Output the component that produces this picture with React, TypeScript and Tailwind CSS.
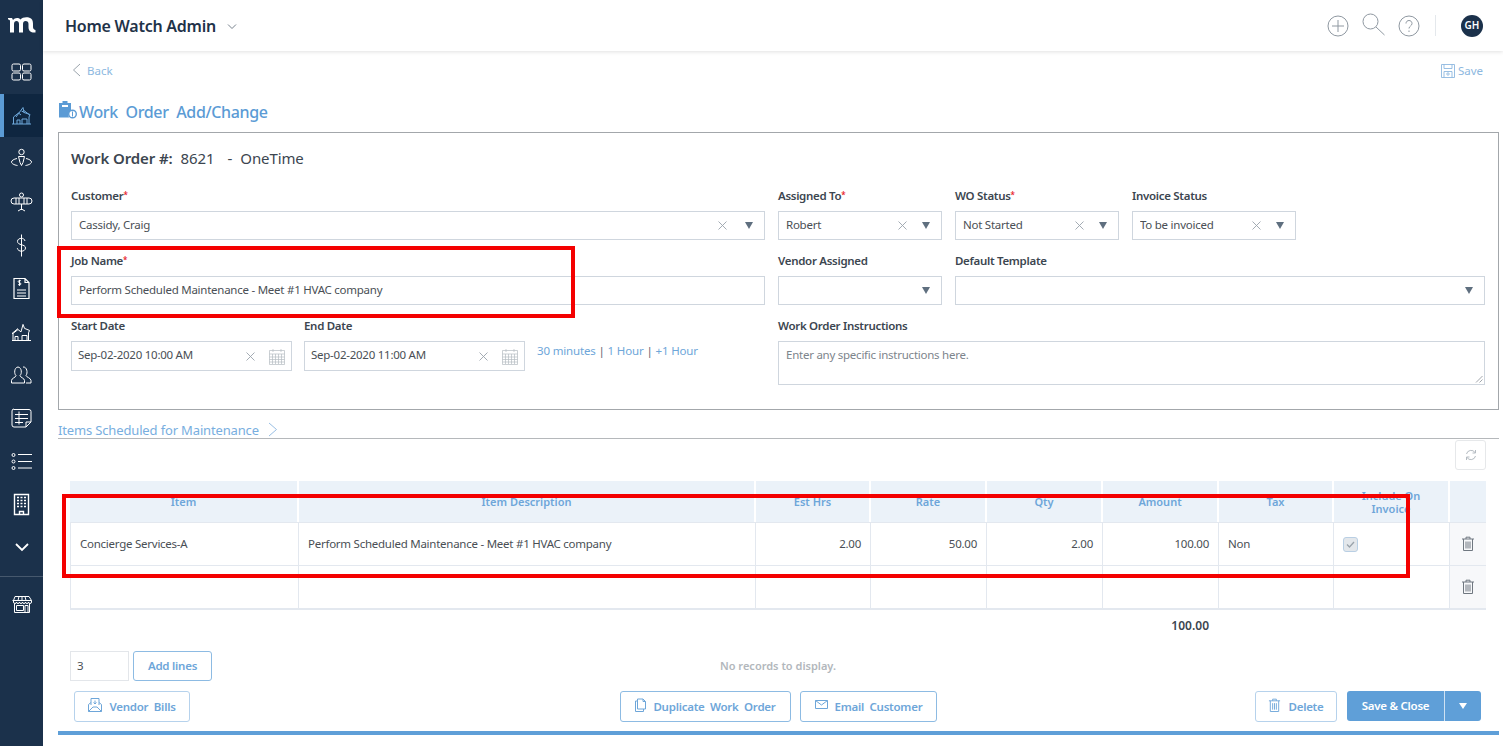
import React from 'react';

const navIcons: React.ReactNode[] = [
  // dashboard
  <g key="a"><rect x="3" y="4" width="8.5" height="7" rx="1.5" /><rect x="13.5" y="4" width="8.5" height="7" rx="1.5" /><rect x="3" y="13" width="8.5" height="7" rx="1.5" /><rect x="13.5" y="13" width="8.500" height="7" rx="1.5" /></g>,
  // properties (active)
  <g key="b"><path d="M3 21h19M4.500 21v-7l5-4 2.500 2M7 14l7-9.500 1 5 6 2-1 2.500v7M8 21v-4h3v4M13 21v-5h5v5M15 7.500l5 4M12.500 8l3 1.500" /></g>,
  // pin person
  <g key="c"><circle cx="12.500" cy="6" r="2.700" /><path d="M9.500 10.500h6l-1.500 6-1.500 3-1.500-3zM8 12.500c-3 .6-5.500 2-5.500 3.500s2.500 3 6 3.500M17 12.500c3 .6 5.500 2 5.500 3.500s-2.500 3-6 3.500" /></g>,
  // plane
  <g key="d"><circle cx="12.500" cy="5" r="2" /><rect x="2" y="8" width="21" height="6" rx="3" /><path d="M7 8v6M18 8v6M10 8v6M15 8v6M12.500 14v6M9 21l3.500-2 3.500 2" /></g>,
  // dollar
  <g key="e"><path d="M16 8c-.5-2-2-2.700-3.500-2.700-2 0-4 1-4 3 0 4.500 8 2.500 8 6.700 0 2-2 3.200-4 3.200s-3.800-1-4.200-3M12.500 1.500v22" /></g>,
  // invoice
  <g key="f"><path d="M5 2.500h11l4 4v16H5zM16 2.500v4h4M8 14h9M8 17h9M8 20h9" strokeWidth="1.200" /><path d="M12 5c-.5-.8-2.500-.8-2.800.4-.2 1.600 2.900 1 2.800 2.600-.2 1.200-2.400 1.200-3 .2M10.500 3.800v6" /></g>,
  // houses
  <g key="g"><path d="M3 21.500h19M4 21.500v-7l5-4 3 2.400 2-7.500 1.500 4 5 2-1 2.500v8.100M6 21.500v-4h3v4M13 21.500v-5h5v5M4 14.500H3l6-5" /></g>,
  // people
  <g key="h"><path d="M2.500 21v-2.500c0-2.500 4.500-3 4.500-5-2-1.500-2-8 2-8.500 4 .5 4 7 2 8.500 0 2 4.500 2.500 4.500 5V21zM14 5c4-.5 5 6 3 8.500 0 1.500 5 2.500 5 5V21h-5" /></g>,
  // list card
  <g key="i"><path d="M5 3.500h15a2 2 0 0 1 2 2v10.500l-5 5H5a2 2 0 0 1-2-2v-14a2 2 0 0 1 2-2zM6 8.500h13M6 12.500h13M6 16.500h8M10 5.500v13M22 16h-5v5" /></g>,
  // bullet list
  <g key="j"><circle cx="4.500" cy="6" r="1.500" /><circle cx="4.500" cy="12.500" r="1.500" /><circle cx="4.500" cy="19" r="1.500" /><path d="M9 5.500h14M9 12.500h14M9 19h14" /></g>,
  // building
  <g key="k"><path d="M5.500 2.500h14v20h-14zM10.500 22.500v-3h4v3M8 5.500h2M11.500 5.500h2M15 5.500h2M8 8.500h2M11.500 8.500h2M15 8.500h2M8 11.500h2M11.500 11.500h2M15 11.500h2M8 14.500h2M11.500 14.500h2M15 14.500h2" strokeWidth="1.400" /></g>,
];

function NavIcon({ children, active }: { children: React.ReactNode; active?: boolean }) {
  return (
    <div className={`h-[43.2px] flex items-center justify-center border-l-4 pr-1 ${active ? 'bg-[#0f2640] border-[#5b9bd5]' : 'border-transparent'}`}>
      <svg width="25" height="25" viewBox="0 0 25 25" fill="none" stroke={active ? '#6fa9dc' : '#ffffff'} strokeWidth="1" className="ml-[-1px]">
        {children}
      </svg>
    </div>
  );
}

function Caret({ wide }: { wide?: boolean }) {
  return <span className={`w-0 h-0 border-x-[4.5px] border-x-transparent border-t-[7px] border-t-[#5f6f7f] mr-[11px] shrink-0 ${wide ? 'ml-[18px]' : 'ml-[15px]'}`} />;
}

function Clear() {
  return (
    <svg width="9" height="9" viewBox="0 0 9 9" stroke="#9aa3ab" strokeWidth="0.9" className="shrink-0">
      <path d="M.5.5l8 8M8.500.5l-8 8" />
    </svg>
  );
}

function Calendar() {
  return (
    <svg width="16" height="17" viewBox="0 0 16 17" fill="none" stroke="#b4bbc1" strokeWidth="1" className="shrink-0 ml-[14px] mr-[6px]">
      <path d="M.5 2.500h15v14H.5zM.5 6h15M4 1v3M12 1v3M.5 9h15M.5 11.500h15M.5 14h15M3.500 6v10M6.500 6v10M9.500 6v10M12.500 6v10" strokeWidth="0.7" />
    </svg>
  );
}

function Label({ text, required }: { text: string; required?: boolean }) {
  return (
    <div className="h-[16px] leading-[16px] text-[11.500px] tracking-[-0.3px] font-semibold text-[#3c4650] mb-[7px]">
      {text}
      {required && <span className="text-[#e8242c] text-[8px] relative top-[-2px]">*</span>}
    </div>
  );
}

function Select({ value, clear = true, wide, className }: { value?: string; clear?: boolean; wide?: boolean; className: string }) {
  return (
    <div className={`h-[29px] flex items-center border border-[#cfd6de] pl-[7px] text-[11.500px] tracking-[-0.25px] text-[#4a4f55] bg-white ${className}`}>
      <span className="flex-1 truncate pb-[1px]">{value}</span>
      {clear && <Clear />}
      <Caret wide={wide} />
    </div>
  );
}

function DateField({ value }: { value: string }) {
  return (
    <div className="w-[221px]">
      <div className="h-[30px] flex items-center border border-[#cfd6de] pl-[6px] text-[11.500px] tracking-[-0.25px] text-[#4a4f55]">
        <span className="flex-1 pb-[2px]">{value}</span>
        <Clear />
        <Calendar />
      </div>
    </div>
  );
}

function Btn({ icon, text, className }: { icon?: React.ReactNode; text: string; className: string }) {
  return (
    <button className={`h-[31px] flex items-center justify-center gap-[7px] border border-[#8dbbe3] rounded-[3px] text-[11.500px] tracking-[-0.25px] font-semibold text-[#6ea6d9] whitespace-pre bg-white ${className}`}>
      {icon}
      {text}
    </button>
  );
}

function Trash({ color = '#6f7780', size = 14, className }: { color?: string; size?: number; className?: string }) {
  return (
    <svg width={size} height={size + 1} viewBox="0 0 14 15" fill="none" stroke={color} strokeWidth="1" className={className}>
      <path d="M1 3h12M5 3V1.200h4V3M2.500 3v11.500h9V3M5 5.500v7M7 5.500v7M9 5.500v7" />
    </svg>
  );
}

const columns = [
  { name: 'Item', w: 'w-[229px]' },
  { name: 'Item Description', w: 'w-[457px]' },
  { name: 'Est Hrs', w: 'w-[115px]' },
  { name: 'Rate', w: 'w-[116px]' },
  { name: 'Qty', w: 'w-[116px]' },
  { name: 'Amount', w: 'w-[116px]' },
  { name: 'Tax', w: 'w-[115px]' },
  { name: 'Include On Invoice', w: 'w-[116px]' },
  { name: '', w: 'w-[36px]' },
];

const rowOne = ['Concierge Services-A', 'Perform Scheduled Maintenance - Meet #1 HVAC company', '2.00', '50.00', '2.00', '100.00', 'Non'];

export default function App() {
  return (
    <div className="relative flex h-[746px] w-[1503px] overflow-hidden bg-white font-['Noto_Sans',sans-serif]">
      {/* Sidebar */}
      <aside className="w-[43px] shrink-0 bg-[#1b314b] flex flex-col">
        <div className="h-[51px] flex items-center justify-center pb-[2px]">
          <svg width="28" height="16" viewBox="0 0 28 16" fill="#ffffff">
            <path d="M0 1h4l1 2c1.500-2 5-3 7.500-.5C14.500 0 20-.5 23 1.500c2 1.500 2 4 2 7 0 2 0 4 2.500 4.500v2.500c-4 .5-7-1-7-5.500V7c0-2-1-3-3-3-1.500 0-2.500 1-2.500 3v8.500h-4V7c0-2-1-3-2.500-3C7 4 6 5 6 7v8.500H2V4c0-1-1-1.500-2-1.500z" />
          </svg>
        </div>
        {navIcons.map((icon, i) => (
          <NavIcon key={i} active={i === 1}>{icon}</NavIcon>
        ))}
        <div className="h-[43px] flex items-center justify-center">
          <svg width="14" height="9" viewBox="0 0 14 9" fill="none" stroke="#ffffff" strokeWidth="1.800"><path d="M1 1l6 6 6-6" /></svg>
        </div>
        <div className="h-px bg-[#46586d] mt-[7px]" />
        <div className="h-[55px] flex items-center justify-center">
          <svg width="20" height="17" viewBox="0 0 20 17" fill="none" stroke="#ffffff" strokeWidth="1">
            <path d="M3 .5h14l2.500 4v1.500a1.500 1.500 0 0 1-3 0 1.500 1.500 0 0 1-3 0 1.500 1.500 0 0 1-3 0 1.500 1.500 0 0 1-3 0 1.500 1.500 0 0 1-3 0 1.500 1.500 0 0 1-3 0V4.500zM.5 4.500h19M7 .5l-1 4M13 .5l1 4M10 .5v4M2.500 7.500v9h15v-9M4.500 9.500h7v5h-7zM13 9.500h3v7h-3z" />
          </svg>
        </div>
      </aside>

      <main className="flex-1 min-w-0 flex flex-col">
        {/* Top bar */}
        <header className="h-[51px] shrink-0 flex items-center bg-white shadow-[0_1px_4px_rgba(0,0,0,0.12)] pl-[22px] pr-[20px]">
          <span className="text-[16px] tracking-[-0.25px] font-semibold text-[#1f3349]">Home Watch Admin</span>
          <svg width="10" height="6" viewBox="0 0 10 6" fill="none" stroke="#77818c" strokeWidth="1" className="ml-[11px] mt-[3px]"><path d="M1 .5l4 4 4-4" /></svg>
          <div className="ml-auto flex items-center">
            <svg width="22" height="22" viewBox="0 0 22 22" fill="none" stroke="#8f98a1" strokeWidth="1"><circle cx="11" cy="11" r="10" /><path d="M11 5v12M5 11h12" /></svg>
            <svg width="23" height="23" viewBox="0 0 23 23" fill="none" stroke="#8f98a1" strokeWidth="1" className="ml-[13px] mb-[3px]"><circle cx="8.500" cy="8.500" r="7.500" /><path d="M14 14l8.500 8" /></svg>
            <svg width="22" height="22" viewBox="0 0 22 22" fill="none" stroke="#8f98a1" strokeWidth="1" className="ml-[13px]"><circle cx="11" cy="11" r="10" /><path d="M8 8.500c0-4 6-4 6 0 0 2.500-3 2.500-3 5M11 15.500v1.500" /></svg>
            <div className="h-[21px] w-px bg-[#e4e8ec] ml-[15px]" />
            <div className="ml-[25px] w-[22px] h-[22px] rounded-full bg-[#1b314b] flex items-center justify-center text-[10px] font-semibold text-white">GH</div>
          </div>
        </header>

        <div className="pl-[15px] pr-[4px] flex-1 flex flex-col">
          {/* Back / Save */}
          <div className="h-[39px] flex items-center pl-[14px] pr-[16px] text-[11.500px] text-[#8db8e0]">
            <svg width="9" height="14" viewBox="0 0 9 14" fill="none" stroke="#8f98a1" strokeWidth="0.9" className="mb-[2px]"><path d="M8 1L1.500 7 8 13" /></svg>
            <span className="ml-[6px]">Back</span>
            <div className="ml-auto flex items-center gap-[3px]">
              <svg width="14" height="14" viewBox="0 0 14 14" fill="none" stroke="#8db8e0" strokeWidth="0.9"><path d="M.5.500h13v13H.5zM3 .5v4h8v-4M3 13.500v-6h8v6" /><circle cx="7" cy="10" r="1.200" /></svg>
              <span>Save</span>
            </div>
          </div>

          {/* Title */}
          <div className="h-[42px] flex items-start pt-[12px]">
            <svg width="19" height="19" viewBox="0 0 19 19" className="mt-[-2px] mr-[2px]">
              <path d="M1 3h3.500V1h5v2H13v8.500a4.500 4.500 0 0 0-2 6H1z" fill="#5b9bd5" />
              <rect x="4" y="5" width="6" height="2" fill="#ffffff" />
              <circle cx="14.500" cy="14" r="3.800" fill="#ffffff" stroke="#5b9bd5" strokeWidth="1.400" />
              <path d="M14.500 11.500v5" stroke="#5b9bd5" strokeWidth="1" />
            </svg>
            <span className="text-[16px] leading-[20px] tracking-[-0.35px] font-medium text-[#5b9bd5] whitespace-pre">Work  Order  Add/Change</span>
          </div>

          {/* Form panel */}
          <section className="h-[278px] border border-[#a3a7ab] pl-[12px] pr-[13px] pt-[15px] flex flex-col">
            <div className="h-[21px] flex items-center text-[#3c4650] text-[15px] tracking-[-0.1px] whitespace-pre">
              <span className="font-semibold">Work Order #:</span>
              <span className="ml-[8px]">8621</span>
              <span className="ml-[13px]">-</span>
              <span className="ml-[8px]">OneTime</span>
            </div>
            <div className="mt-[19px] flex gap-[13px]">
              {/* Left column */}
              <div className="w-[694px] shrink-0">
                <Label text="Customer" required />
                <Select value="Cassidy, Craig" wide className="w-full" />
                <div className="mt-[13px]">
                  <Label text="Job Name" required />
                  <div className="h-[29px] flex items-center border border-[#cfd6de] pl-[7px] pb-[1px] text-[11.500px] tracking-[-0.25px] text-[#4a4f55]">Perform Scheduled Maintenance - Meet #1 HVAC company</div>
                </div>
                <div className="mt-[13px] flex">
                  <div>
                    <Label text="Start Date" />
                    <DateField value="Sep-02-2020 10:00 AM" />
                  </div>
                  <div className="ml-[12px]">
                    <Label text="End Date" />
                    <DateField value="Sep-02-2020 11:00 AM" />
                  </div>
                  <div className="ml-[12px] mt-[25px] text-[11.500px] tracking-[-0.15px] text-[#6ea6d9] leading-[16px] whitespace-pre">
                    30 minutes <span className="text-[#5d6670]">|</span> 1 Hour <span className="text-[#5d6670]">|</span> +1 Hour
                  </div>
                </div>
              </div>

              {/* Right column */}
              <div className="flex-1 min-w-0">
                <div className="flex gap-[13px]">
                  <div className="w-[164px]"><Label text="Assigned To" required /><Select value="Robert" className="w-full" /></div>
                  <div className="w-[164px]"><Label text="WO Status" required /><Select value="Not Started" className="w-full" /></div>
                  <div className="w-[164px]"><Label text="Invoice Status" /><Select value="To be invoiced" className="w-full" /></div>
                </div>
                <div className="mt-[13px] flex gap-[13px]">
                  <div className="w-[164px] shrink-0"><Label text="Vendor Assigned" /><Select clear={false} className="w-full" /></div>
                  <div className="flex-1"><Label text="Default Template" /><Select clear={false} className="w-full" /></div>
                </div>
                <div className="mt-[13px]">
                  <Label text="Work Order Instructions" />
                  <div className="relative h-[44px] border border-[#cfd6de] pl-[7px] pt-[4px] text-[11.500px] tracking-[-0.25px] text-[#7d858c]">
                    Enter any specific instructions here.
                    <svg width="8" height="8" viewBox="0 0 8 8" stroke="#8a9097" strokeWidth="0.8" className="absolute right-[1px] bottom-[1px]"><path d="M1 7.500l6.500-6.500M4.500 7.500l3-3" /></svg>
                  </div>
                </div>
              </div>
            </div>
          </section>

          {/* Section heading */}
          <div className="mt-[11px] h-[18px] flex items-end border-b border-[#b5b8bb] text-[13px] tracking-[-0.15px] leading-[16px] text-[#78aee0]">
            <span>Items Scheduled for Maintenance</span>
            <svg width="10" height="15" viewBox="0 0 10 15" fill="none" stroke="#8db8e0" strokeWidth="0.9" className="ml-[9px] mb-[1px]"><path d="M1 1l7.500 6.500L1 14" /></svg>
          </div>

          {/* Table */}
          <div className="pl-[12px] pr-[13px]">
            <div className="flex justify-end mt-[1px]">
              <div className="w-[31px] h-[30px] border border-[#e6e8ea] rounded-[3px] flex items-center justify-center">
                <svg width="12" height="12" viewBox="0 0 12 12" fill="none" stroke="#b4bbc1" strokeWidth="1"><path d="M1.500 5a4.700 4.700 0 0 1 8.500-1.500M10.500 7a4.700 4.700 0 0 1-8.500 1.500M10.500 1v3H7.500M1.500 11V8h3" /></svg>
              </div>
            </div>
            <div className="mt-[11px] border-b-2 border-[#e3e8ef]">
              <div className="flex h-[42px] bg-[#ebf2f9] border-b border-[#e3e8ef]">
                {columns.map(c => (
                  <div key={c.name} className={`${c.w} shrink-0 border-r-2 border-white flex items-center justify-center text-center text-[11px] leading-[13px] font-semibold text-[#6ea6d9] px-[20px]`}>
                    {c.name}
                  </div>
                ))}
              </div>
              {[0, 1].map(row => (
                <div key={row} className={`flex ${row === 0 ? 'h-[43px] border-b border-[#e3e8ef]' : 'h-[42px]'}`}>
                  {columns.map((c, i) => (
                    <div
                      key={c.name}
                      className={`${c.w} shrink-0 border-r border-[#e3e8ef] flex items-center text-[11.500px] tracking-[-0.25px] text-[#4a4f55] px-[9px] ${i === 0 ? 'border-l' : ''} ${i >= 2 && i <= 5 ? 'justify-end' : ''} ${i === 8 ? 'justify-center bg-[#f7f8fa] !border-r-0' : ''}`}
                    >
                      {row === 0 && rowOne[i]}
                      {row === 0 && i === 7 && (
                        <span className="w-[15px] h-[15px] rounded-[3px] border border-[#b9cfe4] bg-[#e3e7eb] flex items-center justify-center">
                          <svg width="9" height="7" viewBox="0 0 9 7" fill="none" stroke="#9aa3ab" strokeWidth="1.300"><path d="M1 3.500l2.500 2.500L8 1" /></svg>
                        </span>
                      )}
                      {i === 8 && <Trash className="mb-[2px]" />}
                    </div>
                  ))}
                </div>
              ))}
            </div>

            <div className="w-[1139px] text-right text-[12px] font-semibold text-[#3c4650] mt-[7px] mb-[17px] leading-[17px]">100.00</div>

            {/* Add lines */}
            <div className="grid grid-cols-[1fr_auto_1fr] items-center">
              <div className="flex gap-[4px]">
                <div className="w-[59px] h-[30px] border border-[#e3e6ea] flex items-center pl-[6px] text-[11.500px] text-[#4a4f55]">3</div>
                <Btn text="Add lines" className="w-[79px] !h-[30px]" />
              </div>
              <div className="text-[11px] font-semibold text-[#b2b7bc]">No records to display.</div>
              <div />
            </div>
          </div>

          {/* Footer actions */}
          <div className="mt-[10px] pl-[16px] pr-[18px] flex items-center">
            <div className="flex-1 flex">
              <Btn
                text="Vendor  Bills"
                className="w-[116px] !border-[#b6d2ec]"
                icon={
                  <svg width="14" height="14" viewBox="0 0 14 14" fill="none" stroke="#6ea6d9" strokeWidth="1" className="mb-[3px]"><path d="M.5 6.500v7h13v-7L11 4.500M.5 6.500L3 4.500M.5 13.500L5 9h4l4.500 4.500M3 7V.5h8V7M7 2.500v3M5.500 4.500L7 6l1.500-1.500" /></svg>
                }
              />
            </div>
            <div className="flex gap-[9px] ml-[2px]">
              <Btn
                text="Duplicate  Work  Order"
                className="w-[171px]"
                icon={
                  <svg width="11" height="14" viewBox="0 0 11 14" fill="none" stroke="#6ea6d9" strokeWidth="1" className="mb-[3px]"><path d="M2.500 1h5.500l2.500 2.500V11h-8zM8 1v2.500h2.500M2.500 3H.5v10.500h8V11" /></svg>
                }
              />
              <Btn
                text="Email  Customer"
                className="w-[137px]"
                icon={
                  <svg width="13" height="10" viewBox="0 0 13 10" fill="none" stroke="#6ea6d9" strokeWidth="1" className="mb-[3px]"><path d="M.5.5h12v8H.5zM.5.5l6 4.500 6-4.500" /></svg>
                }
              />
            </div>
            <div className="flex-1 flex justify-end gap-[10px]">
              <Btn text="Delete" className="w-[82px] !border-[#b6d2ec]" icon={<Trash color="#6ea6d9" size={13} className="mb-[3px]" />} />
              <div className="flex h-[30px] rounded-[3px] overflow-hidden bg-[#5f9fd8] text-white text-[11.500px] tracking-[-0.25px] font-semibold">
                <div className="w-[97px] flex items-center justify-center">Save &amp; Close</div>
                <div className="w-px bg-[#cfe2f3]" />
                <div className="w-[36px] flex items-center justify-center">
                  <span className="w-0 h-0 border-x-[4px] border-x-transparent border-t-[6px] border-t-white" />
                </div>
              </div>
            </div>
          </div>

          <div className="mt-[9px] h-[4px] bg-[#5f9fd8]" />
        </div>
      </main>

      {/* Annotation boxes drawn over the screenshot */}
      <div className="absolute left-[57px] top-[246px] w-[518px] h-[72px] border-[4px] border-[#f40000] pointer-events-none" />
      <div className="absolute left-[62px] top-[494px] w-[1348px] h-[84px] border-[4px] border-[#f40000] pointer-events-none" />
    </div>
  );
}
